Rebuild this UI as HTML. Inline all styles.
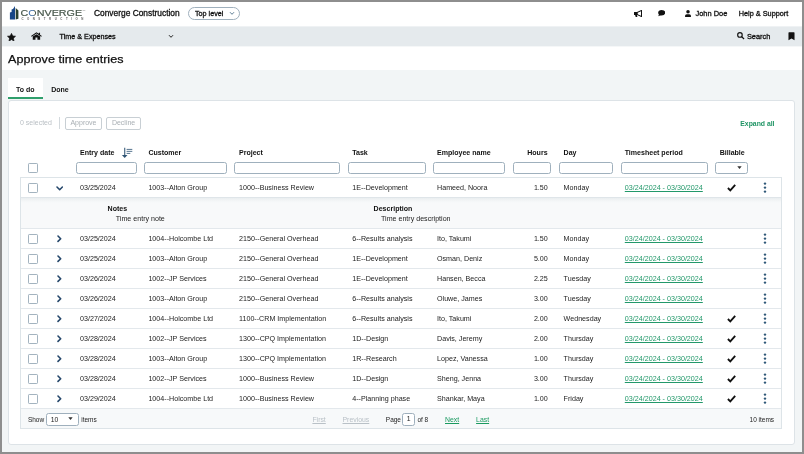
<!DOCTYPE html>
<html><head><meta charset="utf-8"><title>Approve time entries</title>
<style>
*{box-sizing:border-box;margin:0;padding:0}
html,body{width:804px;height:454px;overflow:hidden;background:#8e8e8e}
body{font-family:"Liberation Sans",Arial,sans-serif;color:#1a1a1a;font-size:7.5px;position:relative}
#app{will-change:transform;position:absolute;left:2px;top:2px;width:800px;height:450px;background:#f2f5f6;overflow:hidden}
.abs{position:absolute;white-space:nowrap}
#hdr{position:absolute;left:0;top:0;width:800px;height:24px;background:#fff}
#nav{position:absolute;left:0;top:24px;width:800px;height:20px;background:#e5eaed;box-shadow:inset 0 1px 0 #eff2f4}
#ttl{position:absolute;left:0;top:44px;width:800px;height:24px;background:#fff;border-top:1px solid #f5f7f8}
#ttl span{-webkit-text-stroke:0.25px #111;position:absolute;left:6px;top:4.5px;font-size:11.7px;line-height:14px;color:#111;transform:scaleX(1.077);transform-origin:left center;white-space:nowrap}
.tab{position:absolute;font-size:7px;font-weight:bold;text-align:center;color:#111}
#panel{position:absolute;left:6px;top:98px;width:787px;height:345px;background:#fff;border:1px solid #dde3e7;border-radius:3px}
#ghead{position:absolute;left:0;top:0;width:800px;height:0}
#gbody{position:absolute;left:18px;top:175px;width:762px;height:252px;border:1px solid #dde4e8;background:#fff}
.hd{position:absolute;top:146.2px;line-height:10px;font-weight:bold;font-size:7.05px;color:#111;white-space:nowrap}
.fi{position:absolute;top:160px;height:12px;border:1px solid #9fb0bd;border-radius:2.5px;background:#fff}
.cb{position:absolute;width:10.4px;height:10.4px;border:1px solid #a3b3bf;border-radius:1.2px;background:#fff}
.row{position:absolute;left:0;width:760px;height:20px;border-top:1px solid #e3e8ec;background:#fff}
.row.first{border-top-color:transparent;background:transparent}
.row .t{position:absolute;top:0.8px;line-height:19px;font-size:7.15px;color:#222;white-space:nowrap}
.row .lnk{color:#22986a;font-size:7.17px;text-decoration:underline;text-decoration-thickness:0.7px;text-underline-offset:0.6px}
.cv{position:absolute;display:block}
.cv circle{fill:#2f5878}
.ckw{position:absolute;width:9px;height:7.5px}
.ck{width:9px;height:7.5px;display:block}
.dots{position:absolute;width:3px;height:11px}
.dots i{display:block;width:2.1px;height:2.1px;border-radius:1.05px;background:#33597c;margin-bottom:1.6px}
#detail{position:absolute;left:0;top:19px;width:760px;height:31px;background:linear-gradient(#eaeef0 0,#f4f6f7 3px,#f8f9fa 5px);border-top:1px solid #dfe5e9}
.dh{font-weight:bold;font-size:7.05px;line-height:10px;color:#111}
.dt{font-size:7.1px;line-height:10px;color:#222}
#foot{position:absolute;left:0;top:230px;width:760px;height:20px;border-top:1px solid #e3e8ec;background:#f7f9fa}
.btn{position:absolute;top:115px;height:12.7px;border:1px solid #c8cfd4;border-radius:2px;font-size:7px;color:#a9afb4;text-align:center;line-height:10.8px;background:#fff}
.pg{position:absolute;top:0.8px;line-height:20px;font-size:6.5px;white-space:nowrap;color:#222}
.pl{font-size:6.9px;text-decoration:underline;text-decoration-thickness:0.7px;text-underline-offset:0.6px}
.md{-webkit-text-stroke:0.3px #111}
</style></head><body>
<div id="app">
 <div id="hdr">
  <svg class="abs" style="left:0;top:0" width="92" height="24" viewBox="0 0 92 24">
   <defs><linearGradient id="og" gradientUnits="userSpaceOnUse" x1="27" y1="0" x2="35.5" y2="0"><stop offset="0" stop-color="#3566a3"/><stop offset="0.5" stop-color="#3566a3"/><stop offset="0.62" stop-color="#46564a"/><stop offset="1" stop-color="#46564a"/></linearGradient></defs>
   <path d="M7.9 17.5 V10.6 L9.6 9.9 V7.6 L11 6.9 L13 4.1 V17.5Z" fill="#184686"/>
   <path d="M13.7 6 L16.4 8.4 V16.8 L13.7 17.5Z" fill="#2c4230"/>
   <text x="18.6" y="13.7" font-family="'Liberation Sans',Arial,sans-serif" font-size="8.3" fill="#46564a" stroke="#46564a" stroke-width="0.18" textLength="61.5" lengthAdjust="spacingAndGlyphs">C<tspan fill="url(#og)" stroke="none">O</tspan>NVERGE</text>
   <text x="19.4" y="17.5" font-family="'Liberation Sans',Arial,sans-serif" font-size="2.9" font-weight="bold" fill="#626262" textLength="62" lengthAdjust="spacing">CONSTRUCTION</text>
   <text x="80.6" y="9" font-family="'Liberation Sans',Arial,sans-serif" font-size="1.8" fill="#666">TM</text>
  </svg>
  <span class="abs md" style="left:92px;top:6.3px;font-size:8.4px;line-height:11px;color:#111">Converge Construction</span>
  <div class="abs" style="left:186px;top:5px;width:52px;height:12.5px;border:1px solid #9fb0bd;border-radius:7px;background:#fff"></div>
  <span class="abs md" style="left:193px;top:7.3px;font-size:7.2px;line-height:10px;color:#111">Top level</span>
  <svg class="abs" style="left:227px;top:9.2px" width="6" height="5" viewBox="0 0 6 5"><path d="M1 1.2 L3 3.3 L5 1.2" fill="none" stroke="#56788f" stroke-width="0.95"/></svg>
  <!-- right icons -->
  <svg class="abs" style="left:632px;top:7.8px" width="8.4" height="7.4" viewBox="0 0 8.4 7.4"><path fill-rule="evenodd" d="M0 2.3 Q0 2 0.3 2 H3 L7.3 0 H8.3 V7 H7.3 L3 5 H2.9 L3.5 7.4 H1.8 L1.1 5 H0.3 Q0 5 0 4.7Z M3.7 2.8 V4.2 L7 5.7 V1.3Z" fill="#111"/></svg>
  <svg class="abs" style="left:656px;top:8.2px" width="7.2" height="6.4" viewBox="0 0 7.2 6.4"><ellipse cx="3.7" cy="2.7" rx="3.5" ry="2.7" fill="#111"/><path d="M1.3 3.8 L0.2 6.3 L3.4 5Z" fill="#111"/></svg>
  <svg class="abs" style="left:683.2px;top:7.8px" width="6" height="7.2" viewBox="0 0 6.2 7.6"><circle cx="3.1" cy="1.9" r="1.85" fill="#111"/><path d="M0 7.6 V6.2 Q0 4.4 1.8 4.4 H4.4 Q6.2 4.4 6.2 6.2 V7.6Z" fill="#111"/></svg>
  <span class="abs md" style="left:693.5px;top:6.8px;font-size:7.45px;line-height:10px;color:#111">John Doe</span>
  <span class="abs md" style="left:736.8px;top:6.8px;font-size:7.3px;line-height:10px;color:#111">Help &amp; Support</span>
 </div>
 <div id="nav">
  <svg class="abs" style="left:5.4px;top:6.5px" width="9" height="8.4" viewBox="-0.5 -0.5 11 10.5"><path d="M5 0 L6.5 3.2 L10 3.6 L7.4 6 L8.1 9.5 L5 7.7 L1.9 9.5 L2.6 6 L0 3.6 L3.5 3.2Z" fill="#111" stroke="#111" stroke-width="0.9" stroke-linejoin="round"/></svg>
  <svg class="abs" style="left:28.9px;top:6.2px" width="10.9" height="8" preserveAspectRatio="none" viewBox="0 0 10 9"><path d="M5 0.2 L0 4.6 L0.7 5.3 L5 1.6 L9.3 5.3 L10 4.6 L8.3 3.1 V0.8 H7.2 V2.1Z" fill="#111"/><path d="M1.6 5.2 L5 2.4 L8.4 5.2 V8.8 H5.9 V6.2 H4.1 V8.8 H1.6Z" fill="#111"/></svg>
  <span class="abs md" style="left:57.6px;top:6.3px;font-size:7.2px;line-height:10px;color:#111">Time &amp; Expenses</span>
  <svg class="abs" style="left:165.5px;top:8px" width="6" height="5" viewBox="0 0 6 5"><path d="M1 1.2 L3 3.3 L5 1.2" fill="none" stroke="#222" stroke-width="1"/></svg>
  <svg class="abs" style="left:735px;top:6px" width="7.6" height="7.6" viewBox="0 0 8 8"><circle cx="3.1" cy="3.1" r="2.4" fill="none" stroke="#111" stroke-width="1.2"/><path d="M4.9 4.9 L7.4 7.4" stroke="#111" stroke-width="1.4"/></svg>
  <span class="abs md" style="left:744.9px;top:6.4px;font-size:7.4px;line-height:10px;color:#111">Search</span>
  <svg class="abs" style="left:786px;top:6px" width="7" height="8.5" viewBox="0 0 7 9"><path d="M0.3 0.8 Q0.3 0.2 0.9 0.2 H6.1 Q6.7 0.2 6.7 0.8 V8.8 L3.5 6.8 L0.3 8.8Z" fill="#111"/></svg>
 </div>
 <div id="ttl"><span>Approve time entries</span></div>
 <div class="tab" style="left:6px;width:34.6px;top:76px;background:#fff;border-bottom:2px solid #2f9f6c;height:21px;line-height:23px">To do</div>
 <div class="tab" style="left:47px;width:22px;top:76px;line-height:23px">Done</div>
 <div id="panel"></div>
 <span class="abs" style="left:18px;top:116px;font-size:7px;line-height:10px;color:#b9bfc4">0 selected</span>
 <div class="abs" style="left:56.6px;top:115.4px;width:1px;height:12px;background:#d3d9dd"></div>
 <div class="btn" style="left:62.7px;width:37.6px">Approve</div>
 <div class="btn" style="left:104.3px;width:34.6px">Decline</div>
 <span class="abs" style="left:738.3px;top:116.8px;font-size:6.85px;line-height:10px;color:#1f9464;font-weight:bold">Expand all</span>
 <div id="ghead">
  <span class="hd" style="left:78px">Entry date</span>
  <svg class="abs" style="left:119px;top:144px" width="13" height="13" viewBox="0 0 13 13"><path d="M3.7 1.7 V10.8" stroke="#4a6a86" stroke-width="1.2" fill="none"/><path d="M0.9 8.9 H6.5 L3.7 11.9Z" fill="#2f5474"/><path d="M5.6 3.4 H11.3 M5.6 5.35 H11.3 M5.6 7.4 H9.3" stroke="#55748f" stroke-width="1"/></svg>
  <span class="hd" style="left:146.4px">Customer</span>
  <span class="hd" style="left:237px">Project</span>
  <span class="hd" style="left:350.2px">Task</span>
  <span class="hd" style="left:435px">Employee name</span>
  <span class="hd" style="left:505.6px;width:40px;text-align:right">Hours</span>
  <span class="hd" style="left:561.6px">Day</span>
  <span class="hd" style="left:622.7px">Timesheet period</span>
  <span class="hd" style="left:717.7px">Billable</span>
  <span class="cb" style="left:26px;top:160.5px"></span>
  <div class="fi" style="left:74px;width:60.5px"></div>
  <div class="fi" style="left:142.3px;width:82.5px"></div>
  <div class="fi" style="left:232.3px;width:106px"></div>
  <div class="fi" style="left:345.5px;width:78px"></div>
  <div class="fi" style="left:430.7px;width:72.6px"></div>
  <div class="fi" style="left:510.8px;width:38.7px"></div>
  <div class="fi" style="left:557.2px;width:53.8px"></div>
  <div class="fi" style="left:618.5px;width:87.2px"></div>
  <div class="fi" style="left:713px;width:33.4px"></div>
  <svg class="abs" style="left:735px;top:164.3px" width="5" height="3.2" viewBox="0 0 5 3.2"><path d="M0.3 0.3 H4.7 L2.5 3Z" fill="#333"/></svg>
 </div>
 <div id="gbody">
<div class="row first" style="top:-1px">
<span class="cb" style="left:7px;top:5px"></span>
<svg class="cv" style="left:34.6px;top:7.8px" width="7.4" height="5" viewBox="0 0 7.4 5"><path d="M1 1 L3.7 3.7 L6.4 1" fill="none" stroke="#24466a" stroke-width="1.55" stroke-linecap="round" stroke-linejoin="round"/></svg>
<span class="t" style="left:59px">03/25/2024</span>
<span class="t" style="left:127.4px">1003--Alton Group</span>
<span class="t" style="left:218px">1000--Business Review</span>
<span class="t" style="left:331.2px">1E--Development</span>
<span class="t" style="left:416px">Hameed, Noora</span>
<span class="t" style="left:486.8px;width:40px;text-align:right">1.50</span>
<span class="t" style="left:542.6px">Monday</span>
<span class="t lnk" style="left:603.8px">03/24/2024 - 03/30/2024</span>
<span class="ckw" style="left:705.9px;top:6.1px"><svg class="ck" viewBox="0 0 9 7.5"><path d="M0.9 4 L3.3 6.3 L8.2 0.9" fill="none" stroke="#111" stroke-width="1.85"/></svg></span>
<svg class="cv" style="left:742.3px;top:3px" width="4" height="13" viewBox="0 0 4 13"><circle cx="2" cy="2.6" r="1.2"/><circle cx="2" cy="6.6" r="1.2"/><circle cx="2" cy="10.6" r="1.2"/></svg>
</div>
<div class="row" style="top:50px">
<span class="cb" style="left:7px;top:5px"></span>
<svg class="cv" style="left:35.7px;top:6.3px" width="5" height="7.4" viewBox="0 0 5 7.4"><path d="M1 1 L3.7 3.7 L1 6.4" fill="none" stroke="#24466a" stroke-width="1.55" stroke-linecap="round" stroke-linejoin="round"/></svg>
<span class="t" style="left:59px">03/25/2024</span>
<span class="t" style="left:127.4px">1004--Holcombe Ltd</span>
<span class="t" style="left:218px">2150--General Overhead</span>
<span class="t" style="left:331.2px">6--Results analysis</span>
<span class="t" style="left:416px">Ito, Takumi</span>
<span class="t" style="left:486.8px;width:40px;text-align:right">1.50</span>
<span class="t" style="left:542.6px">Monday</span>
<span class="t lnk" style="left:603.8px">03/24/2024 - 03/30/2024</span>
<svg class="cv" style="left:742.3px;top:3px" width="4" height="13" viewBox="0 0 4 13"><circle cx="2" cy="2.6" r="1.2"/><circle cx="2" cy="6.6" r="1.2"/><circle cx="2" cy="10.6" r="1.2"/></svg>
</div>
<div class="row" style="top:70px">
<span class="cb" style="left:7px;top:5px"></span>
<svg class="cv" style="left:35.7px;top:6.3px" width="5" height="7.4" viewBox="0 0 5 7.4"><path d="M1 1 L3.7 3.7 L1 6.4" fill="none" stroke="#24466a" stroke-width="1.55" stroke-linecap="round" stroke-linejoin="round"/></svg>
<span class="t" style="left:59px">03/25/2024</span>
<span class="t" style="left:127.4px">1003--Alton Group</span>
<span class="t" style="left:218px">2150--General Overhead</span>
<span class="t" style="left:331.2px">1E--Development</span>
<span class="t" style="left:416px">Osman, Deniz</span>
<span class="t" style="left:486.8px;width:40px;text-align:right">5.00</span>
<span class="t" style="left:542.6px">Monday</span>
<span class="t lnk" style="left:603.8px">03/24/2024 - 03/30/2024</span>
<svg class="cv" style="left:742.3px;top:3px" width="4" height="13" viewBox="0 0 4 13"><circle cx="2" cy="2.6" r="1.2"/><circle cx="2" cy="6.6" r="1.2"/><circle cx="2" cy="10.6" r="1.2"/></svg>
</div>
<div class="row" style="top:90px">
<span class="cb" style="left:7px;top:5px"></span>
<svg class="cv" style="left:35.7px;top:6.3px" width="5" height="7.4" viewBox="0 0 5 7.4"><path d="M1 1 L3.7 3.7 L1 6.4" fill="none" stroke="#24466a" stroke-width="1.55" stroke-linecap="round" stroke-linejoin="round"/></svg>
<span class="t" style="left:59px">03/26/2024</span>
<span class="t" style="left:127.4px">1002--JP Services</span>
<span class="t" style="left:218px">2150--General Overhead</span>
<span class="t" style="left:331.2px">1E--Development</span>
<span class="t" style="left:416px">Hansen, Becca</span>
<span class="t" style="left:486.8px;width:40px;text-align:right">2.25</span>
<span class="t" style="left:542.6px">Tuesday</span>
<span class="t lnk" style="left:603.8px">03/24/2024 - 03/30/2024</span>
<svg class="cv" style="left:742.3px;top:3px" width="4" height="13" viewBox="0 0 4 13"><circle cx="2" cy="2.6" r="1.2"/><circle cx="2" cy="6.6" r="1.2"/><circle cx="2" cy="10.6" r="1.2"/></svg>
</div>
<div class="row" style="top:110px">
<span class="cb" style="left:7px;top:5px"></span>
<svg class="cv" style="left:35.7px;top:6.3px" width="5" height="7.4" viewBox="0 0 5 7.4"><path d="M1 1 L3.7 3.7 L1 6.4" fill="none" stroke="#24466a" stroke-width="1.55" stroke-linecap="round" stroke-linejoin="round"/></svg>
<span class="t" style="left:59px">03/26/2024</span>
<span class="t" style="left:127.4px">1003--Alton Group</span>
<span class="t" style="left:218px">2150--General Overhead</span>
<span class="t" style="left:331.2px">6--Results analysis</span>
<span class="t" style="left:416px">Oluwe, James</span>
<span class="t" style="left:486.8px;width:40px;text-align:right">3.00</span>
<span class="t" style="left:542.6px">Tuesday</span>
<span class="t lnk" style="left:603.8px">03/24/2024 - 03/30/2024</span>
<svg class="cv" style="left:742.3px;top:3px" width="4" height="13" viewBox="0 0 4 13"><circle cx="2" cy="2.6" r="1.2"/><circle cx="2" cy="6.6" r="1.2"/><circle cx="2" cy="10.6" r="1.2"/></svg>
</div>
<div class="row" style="top:130px">
<span class="cb" style="left:7px;top:5px"></span>
<svg class="cv" style="left:35.7px;top:6.3px" width="5" height="7.4" viewBox="0 0 5 7.4"><path d="M1 1 L3.7 3.7 L1 6.4" fill="none" stroke="#24466a" stroke-width="1.55" stroke-linecap="round" stroke-linejoin="round"/></svg>
<span class="t" style="left:59px">03/27/2024</span>
<span class="t" style="left:127.4px">1004--Holcombe Ltd</span>
<span class="t" style="left:218px">1100--CRM Implementation</span>
<span class="t" style="left:331.2px">6--Results analysis</span>
<span class="t" style="left:416px">Ito, Takumi</span>
<span class="t" style="left:486.8px;width:40px;text-align:right">2.00</span>
<span class="t" style="left:542.6px">Wednesday</span>
<span class="t lnk" style="left:603.8px">03/24/2024 - 03/30/2024</span>
<span class="ckw" style="left:705.9px;top:6.1px"><svg class="ck" viewBox="0 0 9 7.5"><path d="M0.9 4 L3.3 6.3 L8.2 0.9" fill="none" stroke="#111" stroke-width="1.85"/></svg></span>
<svg class="cv" style="left:742.3px;top:3px" width="4" height="13" viewBox="0 0 4 13"><circle cx="2" cy="2.6" r="1.2"/><circle cx="2" cy="6.6" r="1.2"/><circle cx="2" cy="10.6" r="1.2"/></svg>
</div>
<div class="row" style="top:150px">
<span class="cb" style="left:7px;top:5px"></span>
<svg class="cv" style="left:35.7px;top:6.3px" width="5" height="7.4" viewBox="0 0 5 7.4"><path d="M1 1 L3.7 3.7 L1 6.4" fill="none" stroke="#24466a" stroke-width="1.55" stroke-linecap="round" stroke-linejoin="round"/></svg>
<span class="t" style="left:59px">03/28/2024</span>
<span class="t" style="left:127.4px">1002--JP Services</span>
<span class="t" style="left:218px">1300--CPQ Implementation</span>
<span class="t" style="left:331.2px">1D--Design</span>
<span class="t" style="left:416px">Davis, Jeremy</span>
<span class="t" style="left:486.8px;width:40px;text-align:right">2.00</span>
<span class="t" style="left:542.6px">Thursday</span>
<span class="t lnk" style="left:603.8px">03/24/2024 - 03/30/2024</span>
<span class="ckw" style="left:705.9px;top:6.1px"><svg class="ck" viewBox="0 0 9 7.5"><path d="M0.9 4 L3.3 6.3 L8.2 0.9" fill="none" stroke="#111" stroke-width="1.85"/></svg></span>
<svg class="cv" style="left:742.3px;top:3px" width="4" height="13" viewBox="0 0 4 13"><circle cx="2" cy="2.6" r="1.2"/><circle cx="2" cy="6.6" r="1.2"/><circle cx="2" cy="10.6" r="1.2"/></svg>
</div>
<div class="row" style="top:170px">
<span class="cb" style="left:7px;top:5px"></span>
<svg class="cv" style="left:35.7px;top:6.3px" width="5" height="7.4" viewBox="0 0 5 7.4"><path d="M1 1 L3.7 3.7 L1 6.4" fill="none" stroke="#24466a" stroke-width="1.55" stroke-linecap="round" stroke-linejoin="round"/></svg>
<span class="t" style="left:59px">03/28/2024</span>
<span class="t" style="left:127.4px">1003--Alton Group</span>
<span class="t" style="left:218px">1300--CPQ Implementation</span>
<span class="t" style="left:331.2px">1R--Research</span>
<span class="t" style="left:416px">Lopez, Vanessa</span>
<span class="t" style="left:486.8px;width:40px;text-align:right">1.00</span>
<span class="t" style="left:542.6px">Thursday</span>
<span class="t lnk" style="left:603.8px">03/24/2024 - 03/30/2024</span>
<span class="ckw" style="left:705.9px;top:6.1px"><svg class="ck" viewBox="0 0 9 7.5"><path d="M0.9 4 L3.3 6.3 L8.2 0.9" fill="none" stroke="#111" stroke-width="1.85"/></svg></span>
<svg class="cv" style="left:742.3px;top:3px" width="4" height="13" viewBox="0 0 4 13"><circle cx="2" cy="2.6" r="1.2"/><circle cx="2" cy="6.6" r="1.2"/><circle cx="2" cy="10.6" r="1.2"/></svg>
</div>
<div class="row" style="top:190px">
<span class="cb" style="left:7px;top:5px"></span>
<svg class="cv" style="left:35.7px;top:6.3px" width="5" height="7.4" viewBox="0 0 5 7.4"><path d="M1 1 L3.7 3.7 L1 6.4" fill="none" stroke="#24466a" stroke-width="1.55" stroke-linecap="round" stroke-linejoin="round"/></svg>
<span class="t" style="left:59px">03/28/2024</span>
<span class="t" style="left:127.4px">1002--JP Services</span>
<span class="t" style="left:218px">1000--Business Review</span>
<span class="t" style="left:331.2px">1D--Design</span>
<span class="t" style="left:416px">Sheng, Jenna</span>
<span class="t" style="left:486.8px;width:40px;text-align:right">3.00</span>
<span class="t" style="left:542.6px">Thursday</span>
<span class="t lnk" style="left:603.8px">03/24/2024 - 03/30/2024</span>
<span class="ckw" style="left:705.9px;top:6.1px"><svg class="ck" viewBox="0 0 9 7.5"><path d="M0.9 4 L3.3 6.3 L8.2 0.9" fill="none" stroke="#111" stroke-width="1.85"/></svg></span>
<svg class="cv" style="left:742.3px;top:3px" width="4" height="13" viewBox="0 0 4 13"><circle cx="2" cy="2.6" r="1.2"/><circle cx="2" cy="6.6" r="1.2"/><circle cx="2" cy="10.6" r="1.2"/></svg>
</div>
<div class="row" style="top:210px">
<span class="cb" style="left:7px;top:5px"></span>
<svg class="cv" style="left:35.7px;top:6.3px" width="5" height="7.4" viewBox="0 0 5 7.4"><path d="M1 1 L3.7 3.7 L1 6.4" fill="none" stroke="#24466a" stroke-width="1.55" stroke-linecap="round" stroke-linejoin="round"/></svg>
<span class="t" style="left:59px">03/29/2024</span>
<span class="t" style="left:127.4px">1004--Holcombe Ltd</span>
<span class="t" style="left:218px">1000--Business Review</span>
<span class="t" style="left:331.2px">4--Planning phase</span>
<span class="t" style="left:416px">Shankar, Maya</span>
<span class="t" style="left:486.8px;width:40px;text-align:right">1.00</span>
<span class="t" style="left:542.6px">Friday</span>
<span class="t lnk" style="left:603.8px">03/24/2024 - 03/30/2024</span>
<span class="ckw" style="left:705.9px;top:6.1px"><svg class="ck" viewBox="0 0 9 7.5"><path d="M0.9 4 L3.3 6.3 L8.2 0.9" fill="none" stroke="#111" stroke-width="1.85"/></svg></span>
<svg class="cv" style="left:742.3px;top:3px" width="4" height="13" viewBox="0 0 4 13"><circle cx="2" cy="2.6" r="1.2"/><circle cx="2" cy="6.6" r="1.2"/><circle cx="2" cy="10.6" r="1.2"/></svg>
</div>
  <div id="detail">
   <span class="abs dh" style="left:86.6px;top:5.7px">Notes</span>
   <span class="abs dt" style="left:94.8px;top:16px">Time entry note</span>
   <span class="abs dh" style="left:352.6px;top:5.7px">Description</span>
   <span class="abs dt" style="left:360px;top:16px">Time entry description</span>
  </div>
  <div id="foot">
   <span class="pg" style="left:6.9px">Show</span>
   <div class="abs" style="left:25.2px;top:4px;width:32.8px;height:12.6px;border:1px solid #9fb0bd;border-radius:2.5px;background:#fff"></div>
   <span class="pg" style="left:29.8px;font-size:6.8px">10</span>
   <svg class="abs" style="left:47.3px;top:8.4px" width="5" height="3.2" viewBox="0 0 5 3.2"><path d="M0.3 0.3 H4.7 L2.5 3Z" fill="#333"/></svg>
   <span class="pg" style="left:60.2px">items</span>
   <span class="pg pl" style="left:291.4px;color:#b9c1c7">First</span>
   <span class="pg pl" style="left:321.5px;color:#b9c1c7">Previous</span>
   <span class="pg" style="left:364.8px">Page</span>
   <div class="abs" style="left:381.2px;top:4px;width:13px;height:12.6px;border:1px solid #9fb0bd;border-radius:2.5px;background:#fff;font-size:6.8px;line-height:10.4px;text-align:center;color:#222">1</div>
   <span class="pg" style="left:396.4px">of 8</span>
   <span class="pg pl" style="left:424px;color:#1a9a60">Next</span>
   <span class="pg pl" style="left:455.1px;color:#1a9a60">Last</span>
   <span class="pg" style="right:6.899999999999977px">10 items</span>
  </div>
 </div>
</div>
</body></html>
